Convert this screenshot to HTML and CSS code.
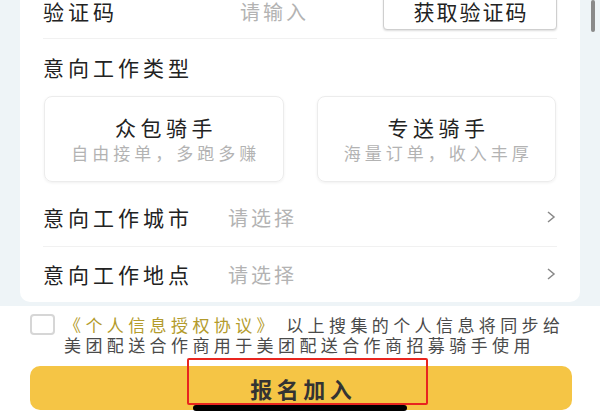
FILE: index.html
```html
<!DOCTYPE html>
<html lang="zh-CN">
<head>
    <meta charset="UTF-8">
    <meta name="viewport" content="width=device-width, initial-scale=1.0">
    <title>骑手报名</title>
    <link rel="stylesheet" href="styles.css">
</head>
<body>
    <div class="page">
        <div class="top">
            <div class="card">
                <div class="row">
                    <span class="label codeLabel">验证码</span>
                    <span class="placeholder">请输入</span>
                    <button class="btnCode">获取验证码</button>
                </div>
                <div class="divider"></div>
                <div class="sectionTitle">意向工作类型</div>
                <div class="types">
                    <div class="typeCard">
                        <div class="typeName">众包骑手</div>
                        <div class="typeDesc">自由接单，多跑多赚</div>
                    </div>
                    <div class="typeCard">
                        <div class="typeName">专送骑手</div>
                        <div class="typeDesc">海量订单，收入丰厚</div>
                    </div>
                </div>
                <div class="row selectRow cityRow">
                    <span class="label">意向工作城市</span>
                    <span class="placeholder">请选择</span>
                    <svg class="arrow" width="10" height="14" viewBox="0 0 10 14">
                        <path d="M2 2 L8 7 L2 12" fill="none" stroke="#888" stroke-width="1.5"/>
                    </svg>
                </div>
                <div class="divider"></div>
                <div class="row selectRow">
                    <span class="label">意向工作地点</span>
                    <span class="placeholder">请选择</span>
                    <svg class="arrow" width="10" height="14" viewBox="0 0 10 14">
                        <path d="M2 2 L8 7 L2 12" fill="none" stroke="#888" stroke-width="1.5"/>
                    </svg>
                </div>
            </div>
        </div>
        <div class="footer">
            <div class="agreement">
                <span class="checkbox"></span>
                <p class="agreeText"><span class="link">《个人信息授权协议》</span> 以上搜集的个人信息将同步给<br>美团配送合作商用于美团配送合作商招募骑手使用</p>
            </div>
            <button class="btnJoin">报名加入</button>
        </div>
    </div>

    <div class="highlight"></div>
    <div class="homeBar"></div>
    <div class="scrollbar"></div>
</body>
</html>
```

FILE: styles.css
```css
* {
    margin: 0;
    padding: 0;
    box-sizing: border-box;
    font-family: "Noto Sans CJK SC", "Noto Sans", sans-serif;
}
html, body {
    width: 600px;
    height: 420px;
    overflow: hidden;
    background: #fff;
}
body {
    position: relative;
}
.page {
    margin-top: -16px;
}
.top {
    background: #eef4f7;
    padding-bottom: 4px;
}
.card {
    background: #fff;
    margin: 0 20px;
    padding: 0 23px 1px;
    border-radius: 0 0 10px 10px;
}
.row {
    display: flex;
    align-items: center;
    height: 54px;
}
.label {
    font-size: 21px;
    letter-spacing: 4px;
    color: #222;
    width: 185px;
}
.codeLabel {
    width: 197px;
}
.placeholder {
    font-size: 20px;
    letter-spacing: 3px;
    color: #b3b3b3;
}
.btnCode {
    margin-left: auto;
    width: 174px;
    height: 38px;
    background: #fff;
    border: 1px solid #cfcfcf;
    border-radius: 4px;
    box-shadow: 0 1px 2px #ddd;
    font-size: 21px;
    letter-spacing: 2px;
    padding-left: 2px;
    color: #222;
}
.divider {
    height: 1px;
    background: #f1f1f1;
}
.sectionTitle {
    height: 57px;
    line-height: 57px;
    font-size: 21px;
    letter-spacing: 4px;
    color: #222;
}
.types {
    display: grid;
    grid-template-columns: 1fr 1fr;
    gap: 33px;
    margin: 0 1px;
}
.typeCard {
    height: 86px;
    border: 1px solid #ececec;
    border-radius: 8px;
    box-shadow: 0 1px 3px #f0f0f0;
    padding-top: 17px;
    text-align: center;
}
.typeName {
    line-height: 26px;
    font-size: 21px;
    letter-spacing: 4.5px;
    padding-left: 4.5px;
    color: #222;
}
.typeDesc {
    line-height: 26px;
    font-size: 17px;
    letter-spacing: 4px;
    padding-left: 4px;
    color: #b3b3b3;
}
.selectRow {
    height: 54px;
}
.cityRow {
    height: 58px;
    margin-top: 6px;
}
.arrow {
    margin-left: auto;
    margin-right: 1px;
}
.footer {
    padding: 9px 28px 0 30px;
}
.agreement {
    display: flex;
    align-items: flex-start;
}
.checkbox {
    width: 25px;
    height: 21px;
    margin-top: -1px;
    margin-right: 9px;
    border: 2px solid #d6d6d6;
    border-radius: 4px;
    flex-shrink: 0;
}
.agreeText {
    font-size: 17px;
    line-height: 20px;
    letter-spacing: 4.4px;
    color: #4a4a4a;
}
.link {
    color: #b39b2c;
}
.btnJoin {
    display: block;
    width: 100%;
    height: 44px;
    margin-top: 11px;
    border: none;
    border-radius: 10px;
    background: #f5c545;
    font-size: 22px;
    font-weight: bold;
    letter-spacing: 4.5px;
    padding-left: 4.5px;
    color: #333;
}
.highlight {
    position: absolute;
    left: 187px;
    top: 358px;
    width: 241px;
    height: 47px;
    border: 2px solid #e8251f;
    border-radius: 2px;
}
.homeBar {
    position: absolute;
    left: 193px;
    top: 405px;
    width: 214px;
    height: 6px;
    background: #000;
    border-radius: 3px;
}
.scrollbar {
    position: absolute;
    left: 591px;
    top: 0;
    width: 4px;
    height: 32px;
    background: #8a8a8a;
    border-radius: 2px;
}
```
